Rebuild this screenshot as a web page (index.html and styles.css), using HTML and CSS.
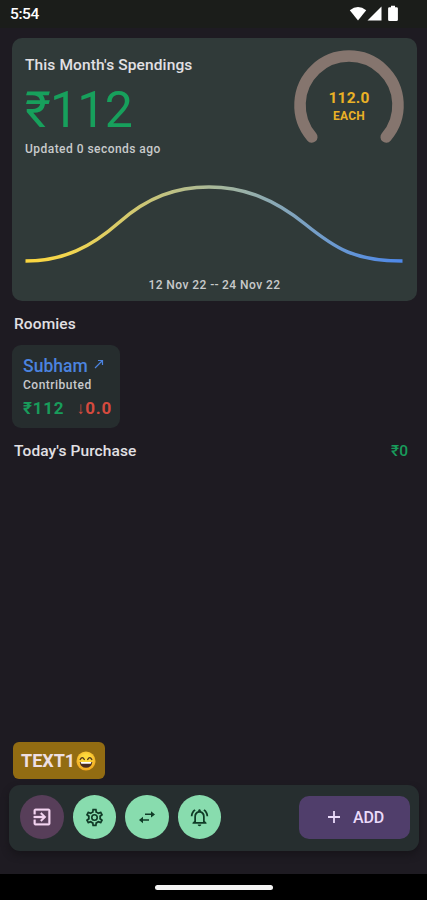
FILE: index.html
```html
<!DOCTYPE html>
<html lang="en">
<head>
<meta charset="utf-8">
<title>Spendings</title>
<link rel="stylesheet" href="styles.css">
</head>
<body>
<div class="app">
  <header class="status">
    <span class="clock">5:54</span>
    <svg class="indicators" width="50" height="18" viewBox="0 0 50 18" fill="#fff">
      <path d="M9 15.500 0.800 5.200Q9-1.200 17.200 5.200Z"/>
      <path d="M18.500 15.500 32.500 1.500V15.500Z"/>
      <path d="M42 .7h4v1.500h1.500q1.400 0 1.400 1.400V14.800q0 1.300-1.400 1.300h-7q-1.400 0-1.400-1.300V3.600q0-1.400 1.400-1.400H42Z"/>
    </svg>
  </header>
  <main class="content">
    <section class="summary">
      <div class="summary-top">
        <div class="totals">
          <h1 class="title">This Month's Spendings</h1>
          <div class="amount">₹112</div>
          <div class="updated">Updated 0 seconds ago</div>
        </div>
        <div class="gauge">
          <svg width="112" height="112" viewBox="0 0 112 112">
            <path d="M18.800 89A49 49 0 1 1 93.200 89" fill="none" stroke="#85756e" stroke-width="11.500" stroke-linecap="round"/>
          </svg>
          <div class="gauge-label"><span class="each-value">112.0</span><span class="each">EACH</span></div>
        </div>
      </div>
      <svg class="chart" width="379" height="90" viewBox="0 0 379 90">
        <defs><linearGradient id="line" x1="0" x2="379" y1="0" y2="0" gradientUnits="userSpaceOnUse"><stop offset="0" stop-color="#fbd63e"/><stop offset=".12" stop-color="#f1d550"/><stop offset=".5" stop-color="#a8b89a"/><stop offset=".85" stop-color="#6596d6"/><stop offset="1" stop-color="#4c87ea"/></linearGradient></defs>
        <path d="M0.500 82C39 82 66 68 94 43.500C123 18 151 8 184 8C219 8 249 20 280 45C311 70 330 82 377.500 82" fill="none" stroke="url(#line)" stroke-width="3.500"/>
      </svg>
      <div class="period">12 Nov 22 <span class="dash">--</span> 24 Nov 22</div>
    </section>
    <h2 class="heading roomies">Roomies</h2>
    <section class="roomie">
      <div class="name">Subham <svg width="10" height="10" viewBox="0 0 10 10" fill="none" stroke="#4b83df" stroke-width="1.200"><path d="M1 9 8 2M4 1.500h4.500V6"/></svg></div>
      <div class="contributed">Contributed</div>
      <div class="figures"><span class="paid">₹112</span><span class="owed"><span class="arrow">↓</span>0.0</span></div>
    </section>
    <div class="purchase"><h2 class="heading">Today's Purchase</h2><span class="purchase-total">₹0</span></div>
    <div class="spacer"></div>
    <div class="chip"><span>TEXT1</span>
      <svg width="20" height="20" viewBox="0 0 20 20"><defs><radialGradient id="face" cx=".5" cy=".4" r=".6"><stop offset=".4" stop-color="#fdd83c"/><stop offset="1" stop-color="#f2a51e"/></radialGradient></defs><circle cx="10" cy="10" r="9.500" fill="url(#face)"/><path d="M4.200 8.500 Q6.300 4.700 8.300 8.500M11.700 8.500Q13.700 4.700 15.800 8.500" fill="none" stroke="#52351d" stroke-width="1.400" stroke-linecap="round"/><path d="M3.700 11H16.300Q15.500 16.800 10 16.800T3.700 11Z" fill="#4b2d20"/><path d="M4.600 11H15.400L14.700 12.700H5.300Z" fill="#fff"/></svg>
    </div>
    <nav class="toolbar">
      <button class="round exit" aria-label="Exit"><svg width="22" height="22" viewBox="0 0 24 24" fill="#f4d5f2" stroke="#f4d5f2" stroke-width=".4"><path d="M10.090 15.590 11.500 17l5-5-5-5-1.410 1.410L12.670 11H3v2h9.670l-2.580 2.590zM19 3H5c-1.110 0-2 .9-2 2v4h2V5h14v14H5v-4H3v4c0 1.100.89 2 2 2h14c1.100 0 2-.9 2-2V5c0-1.100-.9-2-2-2z"/></svg></button>
      <button class="round" aria-label="Settings"><svg width="21" height="21" viewBox="0 0 24 24" fill="#103b27"><path d="M19.430 12.980c.04-.32.070-.64.070-.98 0-.34-.03-.66-.07-.98l2.110-1.650c.19-.15.24-.42.12-.64l-2-3.460c-.12-.22-.37-.3-.61-.22l-2.490 1c-.52-.4-1.080-.73-1.690-.98l-.38-2.650C14.460 2.180 14.250 2 14 2h-4c-.25 0-.46.18-.49.42l-.38 2.650c-.61.25-1.170.59-1.690.98l-2.490-1c-.23-.09-.49 0-.61.22l-2 3.460c-.13.22-.07.49.12.64l2.110 1.650c-.04.32-.07.65-.07.98s.03.66.07.98l-2.110 1.650c-.19.15-.24.42-.12.64l2 3.460c.12.22.37.3.61.22l2.490-1c.52.4 1.080.73 1.690.98l.38 2.650c.03.24.24.42.49.42h4c.25 0 .46-.18.49-.42l.38-2.650c.61-.25 1.170-.59 1.690-.98l2.490 1c.23.09.49 0 .61-.22l2-3.460c.12-.22.07-.49-.12-.64l-2.110-1.650zM17.450 11.270c.04.31.05.52.05.73s-.02.43-.05.73l-.14 1.130.89.7 1.080.84-.7 1.210-1.270-.51-1.040-.42-.9.680c-.43.32-.84.56-1.250.73l-1.060.43-.16 1.130-.2 1.350h-1.400l-.35-2.480-1.060-.43c-.43-.18-.83-.41-1.230-.71l-.91-.7-1.060.43-1.270.51-.7-1.210 1.970-1.540-.14-1.130C6.520 12.430 6.500 12.200 6.500 12s.02-.43.050-.73l.14-1.130-1.970-1.540.7-1.210 2.310.94.910-.7c.43-.32.84-.56 1.240-.72l1.060-.43.350-2.480h1.400l.350 2.480 1.060.43c.43.18.83.41 1.230.71l.91.70 1.060-.43 1.270-.51.7 1.210-1.970 1.540.150 1.130z"/><path d="M12 8a4 4 0 1 0 0 8 4 4 0 0 0 0-8zm0 6.200a2.200 2.200 0 1 1 0-4.400 2.200 2.200 0 0 1 0 4.400z"/></svg></button>
      <button class="round" aria-label="Transfer"><svg width="18" height="14" viewBox="0 0 18 14" fill="#103b27"><path d="M7 3.500h6V1.200L17 4.400l-4 3.200V5.100H7zM11 9.200H5V6.800L1 10l4 3.200V10.800h6z"/></svg></button>
      <button class="round" aria-label="Notifications"><svg width="21" height="21" viewBox="0 0 24 24" fill="#103b27"><path d="M12 22c1.100 0 2-.9 2-2h-4c0 1.100.9 2 2 2zm6-6v-5c0-3.070-1.630-5.640-4.500-6.320V4c0-.83-.67-1.500-1.500-1.500s-1.500.67-1.500 1.500v.68C7.640 5.360 6 7.920 6 11v5l-2 2v1h16v-1l-2-2zm-2 1H8v-6c0-2.480 1.510-4.500 4-4.500s4 2.020 4 4.500v6zM7.580 4.080 6.150 2.650C3.750 4.480 2.170 7.300 2.030 10.500h2c.15-2.650 1.510-4.970 3.550-6.420zm12.390 6.420h2c-.15-3.200-1.730-6.020-4.120-7.850l-1.420 1.430c2.020 1.450 3.390 3.770 3.540 6.420z"/></svg></button>
      <button class="add"><svg width="12" height="12" viewBox="0 0 12 12" stroke="#eadafa" stroke-width="1.800"><path d="M0 6H12M6 0V12"/></svg><span>ADD</span></button>
    </nav>
  </main>
  <footer class="gesture"><div class="handle"></div></footer>
</div>
</body>
</html>
```

FILE: styles.css
```css
* { box-sizing: border-box; }
body { margin: 0; background: #1e1b22; font-family: Roboto, sans-serif; font-weight: 500; color: #e2e0e4; }
h1, h2 { margin: 0; font-weight: 500; }
svg { display: block; flex: none; }
.app { height: 900px; display: flex; flex-direction: column; overflow: hidden; white-space: nowrap; }
.status { height: 28px; flex: none; background: #1b1d1a; display: flex; align-items: center; justify-content: space-between; padding: 0 28px 1px 10px; }
.clock { font-size: 15.500px; line-height: 18px; color: #fff; letter-spacing: -.4px; }
.content { flex: 1; display: flex; flex-direction: column; padding: 10px 8px 23px 9px; }
.summary { height: 263px; margin: 0 2px 0 3px; padding: 10px 13px 0; border-radius: 10px; background: #303a39; }
.summary-top { display: flex; justify-content: space-between; height: 126px; }
.totals { padding-top: 7px; }
.title { font-size: 15.500px; line-height: 20px; letter-spacing: .12px; }
.amount { font-size: 50px; line-height: 60px; margin-top: 5px; font-weight: 400; letter-spacing: -.8px; color: #17a05c; }
.updated { margin-top: 1px; font-size: 12px; line-height: 16px; letter-spacing: .46px; color: #c8cacb; }
.gauge { display: grid; width: 112px; height: 112px; margin-right: -1px; }
.gauge > * { grid-area: 1 / 1; }
.gauge-label { display: flex; flex-direction: column; align-items: center; padding-top: 41px; color: #eab126; }
.each-value { font-size: 15.500px; line-height: 18px; font-weight: 700; letter-spacing: .2px; }
.each { font-size: 12px; line-height: 18px; font-weight: 700; letter-spacing: .3px; }
.chart { margin-top: 5px; }
.period { margin-top: 8px; text-align: center; font-size: 12px; line-height: 16px; letter-spacing: .45px; color: #c8cacb; }
.dash { letter-spacing: .1px; }
.heading { font-size: 15.500px; line-height: 20px; letter-spacing: .1px; }
.roomies { margin: 13px 0 0 5px; }
.roomie { width: 108px; height: 83px; margin: 11px 0 0 3px; padding: 11px 8px 0 11px; border-radius: 9px; background: #262d2e; }
.name { display: flex; gap: 6px; font-size: 17.500px; line-height: 21px; letter-spacing: .05px; color: #4b83df; }
.name svg { margin-top: 3px; }
.contributed { font-size: 12px; line-height: 16px; letter-spacing: .5px; color: #c8c9cc; }
.figures { display: flex; justify-content: space-between; font-size: 17px; line-height: 31px; font-weight: 700; letter-spacing: .75px; }
.paid, .purchase-total { color: #189c5b; }
.owed { color: #d54a3e; }
.arrow { display: inline-block; width: 9px; margin-left: -1px; }
.purchase { display: flex; justify-content: space-between; margin: 13px 11px 0 5px; }
.purchase-total { font-size: 15.500px; line-height: 20px; }
.spacer { flex: 1; }
.chip { display: flex; align-items: center; gap: 1px; width: 92px; height: 37px; margin-left: 4px; padding-left: 8px; border-radius: 6px; background: #926c12; font-size: 18px; font-weight: 700; color: #eddfe2; }
.toolbar { display: flex; align-items: center; gap: 9px; height: 66px; margin-top: 6px; padding: 0 9px 2px 11px; border-radius: 11px; background: #262e2f; box-shadow: 0 4px 7px #17151a; }
button { border: 0; padding: 0; font-family: inherit; }
.round { width: 43.600px; height: 44px; border-radius: 50%; background: #88dcae; display: grid; place-items: center; }
.exit { background: #573e59; }
.add { display: flex; align-items: center; justify-content: center; gap: 13px; width: 111px; height: 43px; margin-left: auto; padding-left: 3px; border-radius: 10px; background: #503e6b; color: #eadafa; font-size: 16px; font-weight: 500; letter-spacing: -.2px; }
.gesture { height: 26px; flex: none; background: #000; display: flex; justify-content: center; padding-top: 11px; }
.handle { width: 118px; height: 5px; border-radius: 3px; background: #f4f4f4; }
```
